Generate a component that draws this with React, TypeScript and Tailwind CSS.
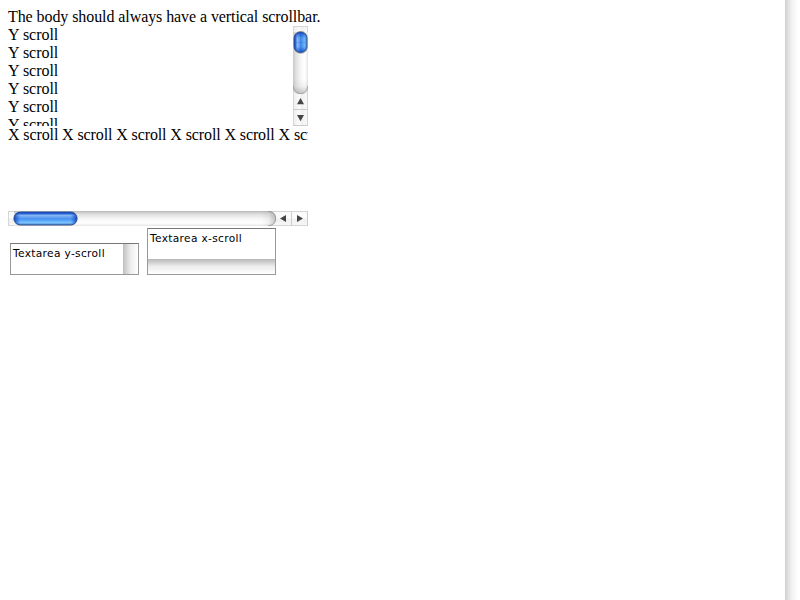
const yLines = ["Y scroll", "Y scroll", "Y scroll", "Y scroll", "Y scroll", "Y scroll"];

function VerticalBar() {
  return (
    <svg className="block h-[100px] w-[15px] shrink-0" viewBox="0 0 15 100">
      <defs>
        <linearGradient id="vTrack">
          <stop offset="0" stopColor="#c8c8c8" />
          <stop offset="0.2" stopColor="#e0e0e0" />
          <stop offset="0.55" stopColor="#f8f8f8" />
          <stop offset="0.8" stopColor="#ffffff" />
          <stop offset="1" stopColor="#e6e6e6" />
        </linearGradient>
        <linearGradient id="vButton">
          <stop offset="0" stopColor="#ececec" />
          <stop offset="0.45" stopColor="#fcfcfc" />
          <stop offset="0.55" stopColor="#f0f0f0" />
          <stop offset="1" stopColor="#fafafa" />
        </linearGradient>
        <linearGradient id="vThumb">
          <stop offset="0" stopColor="#1747c4" />
          <stop offset="0.12" stopColor="#2864d8" />
          <stop offset="0.25" stopColor="#8cb9f4" />
          <stop offset="0.45" stopColor="#5a9cf0" />
          <stop offset="0.55" stopColor="#3f8cf0" />
          <stop offset="0.8" stopColor="#69b6ff" />
          <stop offset="1" stopColor="#4a80c8" />
        </linearGradient>
        <linearGradient id="vEnds" x1="0" y1="0" x2="0" y2="1">
          <stop offset="0" stopColor="#103fb8" stopOpacity="0.95" />
          <stop offset="0.3" stopColor="#1854d2" stopOpacity="0" />
          <stop offset="0.7" stopColor="#1854d2" stopOpacity="0" />
          <stop offset="1" stopColor="#103fb8" stopOpacity="0.85" />
        </linearGradient>
        <linearGradient id="vCap" x1="0" y1="0" x2="0" y2="1">
          <stop offset="0" stopColor="#888888" stopOpacity="0" />
          <stop offset="0.5" stopColor="#888888" stopOpacity="0.1" />
          <stop offset="1" stopColor="#888888" stopOpacity="0.5" />
        </linearGradient>
      </defs>
      <rect width="15" height="100" fill="url(#vButton)" />
      <path d="M0 0.5H15M0.5 0V100M14.5 0V100" stroke="#d6d6d6" fill="none" />
      <path d="M0 6V60C0 65 3 68 7.5 68S15 65 15 60V6Z" fill="url(#vTrack)" />
      <path d="M0 53V60C0 65 3 68 7.5 68S15 65 15 60V53Z" fill="url(#vCap)" />
      <path d="M0.3 60C0.5 65 3 67.6 7.5 67.6S14.5 65 14.7 60" fill="none" stroke="#999999" strokeWidth="0.8" />
      <rect x="0.8" y="5" width="13.9" height="22.8" rx="6.9" fill="#555555" opacity="0.45" />
      <rect x="1" y="6" width="13" height="20.5" rx="6.2" fill="url(#vThumb)" />
      <rect x="1" y="6" width="13" height="20.5" rx="6.2" fill="url(#vEnds)" stroke="#344f80" strokeWidth="0.7" />
      <path d="M7.5 9V24M3 16.5H13" stroke="#2465c8" strokeWidth="0.4" opacity="0.6" />
      <path d="M0 83.5H15M0 99.5H15" stroke="#cccccc" />
      <path d="M7.5 72L11 78.2H4ZM4 89H11L7.5 95.2Z" fill="#454545" />
    </svg>
  );
}

function HorizontalBar() {
  return (
    <svg className="block h-[15px] w-[300px]" viewBox="0 0 300 15">
      <defs>
        <linearGradient id="hTrack" x1="0" y1="0" x2="0" y2="1">
          <stop offset="0" stopColor="#b8b8b8" />
          <stop offset="0.2" stopColor="#dedede" />
          <stop offset="0.55" stopColor="#f8f8f8" />
          <stop offset="0.8" stopColor="#ffffff" />
          <stop offset="1" stopColor="#e6e6e6" />
        </linearGradient>
        <linearGradient id="hButton" x1="0" y1="0" x2="0" y2="1">
          <stop offset="0" stopColor="#fafafa" />
          <stop offset="0.45" stopColor="#fcfcfc" />
          <stop offset="0.55" stopColor="#f0f0f0" />
          <stop offset="1" stopColor="#f8f8f8" />
        </linearGradient>
        <linearGradient id="hThumb" x1="0" y1="0" x2="0" y2="1">
          <stop offset="0" stopColor="#1747c4" />
          <stop offset="0.14" stopColor="#2864d8" />
          <stop offset="0.25" stopColor="#8cb9f4" />
          <stop offset="0.45" stopColor="#5a9cf0" />
          <stop offset="0.55" stopColor="#4792f2" />
          <stop offset="0.82" stopColor="#78c4ff" />
          <stop offset="1" stopColor="#4a80c8" />
        </linearGradient>
        <linearGradient id="hEnds">
          <stop offset="0" stopColor="#103fb8" stopOpacity="0.9" />
          <stop offset="0.1" stopColor="#1854d2" stopOpacity="0" />
          <stop offset="0.9" stopColor="#1854d2" stopOpacity="0" />
          <stop offset="1" stopColor="#103fb8" stopOpacity="0.9" />
        </linearGradient>
        <linearGradient id="hCap">
          <stop offset="0" stopColor="#888888" stopOpacity="0" />
          <stop offset="0.5" stopColor="#888888" stopOpacity="0.1" />
          <stop offset="1" stopColor="#888888" stopOpacity="0.5" />
        </linearGradient>
      </defs>
      <rect width="300" height="15" fill="url(#hButton)" />
      <path d="M0 0.5H300M0 14.5H300M0.5 0V15" stroke="#d6d6d6" fill="none" />
      <path d="M6 0H260C265 0 268 3 268 7.5S265 15 260 15H6Z" fill="url(#hTrack)" />
      <path d="M253 0H260C265 0 268 3 268 7.5S265 15 260 15H253Z" fill="url(#hCap)" />
      <path d="M260 0.3C265 0.5 267.6 3 267.6 7.5S265 14.5 260 14.7" fill="none" stroke="#8e8e8e" strokeWidth="0.8" />
      <rect x="5.3" y="0.8" width="64.4" height="13.9" rx="6.9" fill="#555555" opacity="0.45" />
      <rect x="6" y="1" width="63" height="12.9" rx="6.4" fill="url(#hThumb)" />
      <rect x="6" y="1" width="63" height="12.9" rx="6.4" fill="url(#hEnds)" stroke="#24488f" strokeWidth="0.7" />
      <path d="M283.5 0V15M299.5 0V15" stroke="#cccccc" />
      <path d="M272 7.5L278 4V11ZM289 4L295 7.5L289 11Z" fill="#454545" />
    </svg>
  );
}

export default function App() {
  return (
    <div className="flex h-[600px] w-[800px] overflow-hidden bg-white text-black">
      <main className="w-[785px] pt-2 pl-2 font-['Liberation_Serif',serif] text-[16px] leading-[18px]">
        <p className="tracking-[-0.08px] whitespace-nowrap">The body should always have a vertical scrollbar.</p>
        <div className="flex h-[100px] w-[300px] overflow-hidden">
          <div className="w-[285px] tracking-[-0.03px]">
            {yLines.map((line, i) => (
              <div key={i}>{line}</div>
            ))}
          </div>
          <VerticalBar />
        </div>
        <div className="flex h-[100px] w-[300px] flex-col overflow-hidden">
          <div className="h-[85px] shrink-0 overflow-hidden tracking-[-0.11px] whitespace-nowrap">
            X scroll X scroll X scroll X scroll X scroll X scroll X scroll
          </div>
          <HorizontalBar />
        </div>
        <div className="flex items-end gap-2 pt-0.5 pl-0.5 font-['Lucida_Grande','DejaVu_Sans',sans-serif] text-[10.6px] leading-[13px] tracking-[0.34px]">
          <div className="flex h-8 w-[129px] border border-[#999999] border-t-[#777777]">
            <div className="w-28 pt-[3px] pl-0.5 whitespace-nowrap">Textarea y-scroll</div>
            <div className="w-[15px] bg-linear-to-r from-[#bfbfbf] via-[#ededed] to-white" />
          </div>
          <div className="flex h-[47px] w-[129px] flex-col border border-[#999999] border-t-[#777777]">
            <div className="h-[30px] pt-[3px] pl-0.5 whitespace-nowrap">Textarea x-scroll</div>
            <div className="h-[15px] bg-linear-to-b from-[#b8b8b8] via-[#ededed] to-white" />
          </div>
        </div>
      </main>
      <aside className="w-[15px] bg-linear-to-r from-[#d0d0d0] from-0% via-[#f2f2f2] via-45% to-white to-90%" />
    </div>
  );
}
